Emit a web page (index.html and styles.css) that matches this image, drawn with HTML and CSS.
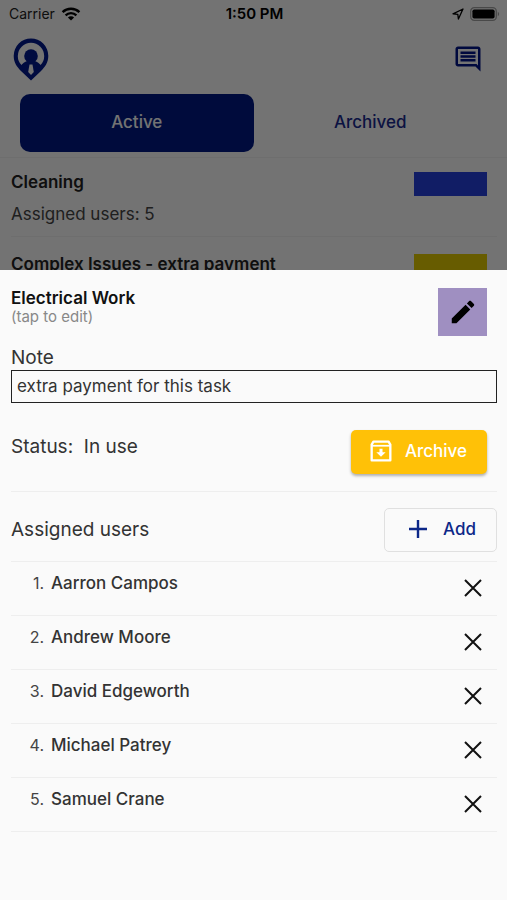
FILE: index.html
```html
<!DOCTYPE html>
<html lang="en">
<head>
<meta charset="utf-8">
<meta name="viewport" content="width=device-width, initial-scale=1">
<title>Tasks</title>
<link rel="stylesheet" href="styles.css">
</head>
<body>
<div class="page">
  <div class="statusbar">
    <div class="carrier">
      <span>Carrier</span>
      <svg width="20" height="14" viewBox="0 0 20 14" fill="none" stroke="#000" aria-hidden="true">
        <path d="M1.6 5.2a12 12 0 0 1 16.8 0" stroke-width="2.4"/>
        <path d="M4.6 8.4a7.6 7.6 0 0 1 10.8 0" stroke-width="2.3"/>
        <path d="M10 13.6 6.9 10.6a4.4 4.4 0 0 1 6.2 0z" fill="#000" stroke="none"/>
      </svg>
    </div>
    <span class="time">1:50 PM</span>
    <div class="indicators">
      <svg width="12" height="12" viewBox="0 0 12 12" fill="none" stroke="#000" stroke-width="1.3" stroke-linejoin="round" aria-hidden="true">
        <path d="M11 1 1 5.800l4.800.5.6 4.700z"/>
      </svg>
      <svg width="30" height="14" viewBox="0 0 30 14" aria-hidden="true">
        <rect x=".7" y=".7" width="25.600" height="12.600" rx="3.600" fill="none" stroke="#a0a0a0" stroke-width="1.3"/>
        <rect x="2.400" y="2.400" width="22.200" height="9.200" rx="1.800"/>
        <path d="M27.800 4.800a2.500 2.500 0 0 1 0 4.400z" fill="#a0a0a0"/>
      </svg>
    </div>
  </div>
  <header class="appbar">
    <svg class="logo" width="36" height="43" viewBox="0 0 36 43" aria-hidden="true">
      <path d="M18 .5A17.300 17.300 0 0 0 .7 17.800c0 7 3.300 11.200 7.300 15.200L18 42.500 28 33c4-4 7.300-8.200 7.300-15.200A17.300 17.300 0 0 0 18 .5z" fill="#00188c"/>
      <circle cx="18" cy="18" r="13.200" fill="#fafafa"/>
      <circle cx="18" cy="18" r="6.800" fill="#00188c"/>
      <path d="M14 23C12 24 9.500 25.200 7.500 28L18 41 28.500 28c-2-2.800-4.500-4-6.500-5z" fill="#00188c"/>
      <path d="M16.500 26.500h3l1.300 7.500-2.800 3-2.800-3z" fill="#fafafa"/>
    </svg>
    <button class="icon-button" type="button" aria-label="Messages">
      <svg width="30" height="30" viewBox="0 0 24 24" fill="#001488" aria-hidden="true">
        <path d="M21.990 4c0-1.100-.89-2-1.990-2H4c-1.100 0-2 .9-2 2v12c0 1.100.9 2 2 2h14l4 4-.01-18zM20 4v13.170L18.830 16H4V4h16zM6 12h12v2H6zm0-3h12v2H6zm0-3h12v2H6z"/>
      </svg>
    </button>
  </header>
  <nav class="tabs">
    <button class="tab tab-active" type="button">Active</button>
    <button class="tab" type="button">Archived</button>
  </nav>
  <main class="tasks">
    <article class="task">
      <div>
        <h2>Cleaning</h2>
        <p>Assigned users: 5</p>
      </div>
      <span class="chip chip-blue"></span>
    </article>
    <article class="task">
      <div>
        <h2>Complex Issues - extra payment</h2>
      </div>
      <span class="chip chip-yellow"></span>
    </article>
  </main>
</div>
<div class="scrim"></div>
<section class="sheet" role="dialog" aria-label="Electrical Work">
  <div class="sheet-head">
    <button class="name" type="button"><strong>Electrical Work</strong><span>(tap to edit)</span></button>
    <button class="color" type="button" aria-label="Change colour">
      <svg width="30" height="30" viewBox="0 0 24 24" aria-hidden="true">
        <path d="M3 17.250V21h3.750L17.810 9.940l-3.750-3.750L3 17.250zM20.710 7.040c.39-.39.39-1.020 0-1.410l-2.340-2.340c-.39-.39-1.020-.39-1.410 0l-1.830 1.830 3.750 3.750 1.830-1.830z"/>
      </svg>
    </button>
  </div>
  <label class="label" for="note">Note</label>
  <input class="note" id="note" type="text" value="extra payment for this task">
  <div class="status">
    <p class="label">Status:&nbsp; In use</p>
    <button class="archive" type="button">
      <svg width="28" height="28" viewBox="0 0 24 24" fill="none" stroke="#fff" stroke-width="2" stroke-linejoin="round" aria-hidden="true">
        <path d="M4 6.500 5.500 4h13L20 6.500V20H4z"/>
        <path d="M4 7.500h16" stroke-width="1.500"/>
        <path d="M10.700 10h2.600v3h2.700l-4 4-4-4h2.700z" fill="#fff" stroke="none"/>
      </svg>
      Archive
    </button>
  </div>
  <div class="users-head">
    <h3 class="label">Assigned users</h3>
    <button class="add" type="button">
      <svg width="18" height="18" viewBox="0 0 18 18" stroke="#0c2788" stroke-width="2.400" aria-hidden="true"><path d="M9 0v18M0 9h18"/></svg>
      Add
    </button>
  </div>
  <ol class="users">
    <li><span class="num">1.</span><span class="user">Aarron Campos</span><button class="remove" type="button" aria-label="Remove Aarron Campos"><svg width="18" height="18" viewBox="0 0 18 18"><path d="M1 1l16 16M17 1 1 17"/></svg></button></li>
    <li><span class="num">2.</span><span class="user">Andrew Moore</span><button class="remove" type="button" aria-label="Remove Andrew Moore"><svg width="18" height="18" viewBox="0 0 18 18"><path d="M1 1l16 16M17 1 1 17"/></svg></button></li>
    <li><span class="num">3.</span><span class="user">David Edgeworth</span><button class="remove" type="button" aria-label="Remove David Edgeworth"><svg width="18" height="18" viewBox="0 0 18 18"><path d="M1 1l16 16M17 1 1 17"/></svg></button></li>
    <li><span class="num">4.</span><span class="user">Michael Patrey</span><button class="remove" type="button" aria-label="Remove Michael Patrey"><svg width="18" height="18" viewBox="0 0 18 18"><path d="M1 1l16 16M17 1 1 17"/></svg></button></li>
    <li><span class="num">5.</span><span class="user">Samuel Crane</span><button class="remove" type="button" aria-label="Remove Samuel Crane"><svg width="18" height="18" viewBox="0 0 18 18"><path d="M1 1l16 16M17 1 1 17"/></svg></button></li>
  </ol>
</section>
</body>
</html>
```
FILE: styles.css
```css
* {
  box-sizing: border-box;
  margin: 0;
  padding: 0;
}

body {
  font-family: Inter, "Liberation Sans", sans-serif;
  font-size: 17px;
  line-height: 20px;
  color: #222;
  background: #fafafa;
}

button {
  font: inherit;
  color: inherit;
  background: none;
  border: 0;
}

svg {
  display: block;
  flex: none;
}

.page {
  height: 100vh;
  overflow: hidden;
}

.statusbar {
  display: grid;
  grid-template-columns: 1fr auto 1fr;
  align-items: center;
  height: 28px;
  padding: 0 7px 0 9px;
  font-size: 14px;
}

.carrier,
.indicators {
  display: flex;
  align-items: center;
  gap: 6px;
}

.indicators {
  justify-content: flex-end;
}

.time {
  font-size: 15px;
  font-weight: 600;
  color: #000;
}

.appbar {
  display: flex;
  align-items: center;
  justify-content: space-between;
  height: 62px;
  padding: 0 24px 0 13px;
}

.tabs {
  display: grid;
  grid-template-columns: 1fr 1fr;
  padding: 4px 20px 5px;
  border-bottom: 1px solid #f0f0f0;
}

.tab {
  height: 58px;
  padding-bottom: 3px;
  border-radius: 10px;
  font-weight: 500;
  color: #1a2a90;
}

.tab-active {
  color: #fafafa;
  background: #001a84;
}

.task {
  display: flex;
  justify-content: space-between;
  height: 79px;
  margin: 0 10px 0 11px;
  padding: 14px 10px 0 0;
  border-bottom: 1px solid #f0f0f0;
}

.task + .task {
  padding-top: 17px;
}

.task h2 {
  font-size: 17px;
  font-weight: 600;
}

.task p {
  margin-top: 12px;
  color: #444;
}

.chip {
  width: 73px;
  height: 24px;
}

.chip-blue {
  background: #2640dd;
}

.chip-yellow {
  background: #e0c800;
}

.scrim {
  position: fixed;
  inset: 0;
  background: rgba(0, 0, 0, 0.54);
}

.sheet {
  position: fixed;
  inset: 30vh 0 0;
  overflow: auto;
  padding: 18px 10px 0 11px;
  background: #fafafa;
}

.sheet-head {
  display: flex;
  justify-content: space-between;
  align-items: flex-start;
  padding-right: 10px;
}

.name {
  text-align: left;
}

.name strong,
.name span {
  display: block;
}

.name strong {
  font-weight: 600;
  color: #111;
}

.name span {
  font-size: 15px;
  line-height: 18px;
  color: #888;
}

.color {
  display: grid;
  place-items: center;
  width: 49px;
  height: 48px;
  background: #9f8fc1;
}

.label {
  display: block;
  font-size: 19px;
  line-height: 24px;
  font-weight: 400;
  color: #333;
}

label.label {
  margin-top: 10px;
}

.note {
  display: block;
  width: 100%;
  height: 33px;
  padding: 0 5px 2px;
  font: inherit;
  color: #333;
  background: #fafafa;
  border: 1px solid #222;
  border-radius: 0;
}

.status {
  display: flex;
  justify-content: space-between;
  align-items: flex-start;
  padding: 27px 10px 17px 0;
  border-bottom: 1px solid #eee;
}

.status .label {
  margin-top: 5px;
}

.archive {
  display: flex;
  align-items: center;
  gap: 10px;
  height: 44px;
  padding: 0 20px 2px 16px;
  border-radius: 5px;
  font-weight: 500;
  color: #fff;
  background: #ffc107;
  box-shadow: 0 2px 3px rgba(0, 0, 0, 0.3);
}

.users-head {
  display: flex;
  justify-content: space-between;
  align-items: center;
  padding: 16px 0 9px;
  border-bottom: 1px solid #eee;
}

.add {
  display: flex;
  align-items: center;
  gap: 16px;
  height: 44px;
  padding: 0 20px 2px 24px;
  border: 1px solid #e0e0e0;
  border-radius: 5px;
  font-weight: 500;
  color: #0c2788;
}

.users {
  list-style: none;
}

.users li {
  display: flex;
  align-items: center;
  height: 54px;
  padding: 0 6px 2px 0;
  border-bottom: 1px solid #eee;
}

.num {
  width: 33px;
  padding-bottom: 9px;
  font-size: 16px;
  text-align: right;
  color: #444;
}

.user {
  flex: 1;
  padding: 0 0 9px 7px;
  font-weight: 500;
  color: #333;
}

.remove {
  display: grid;
  place-items: center;
  width: 36px;
  height: 36px;
}

.remove path {
  stroke: #111;
  stroke-width: 2;
}
```
